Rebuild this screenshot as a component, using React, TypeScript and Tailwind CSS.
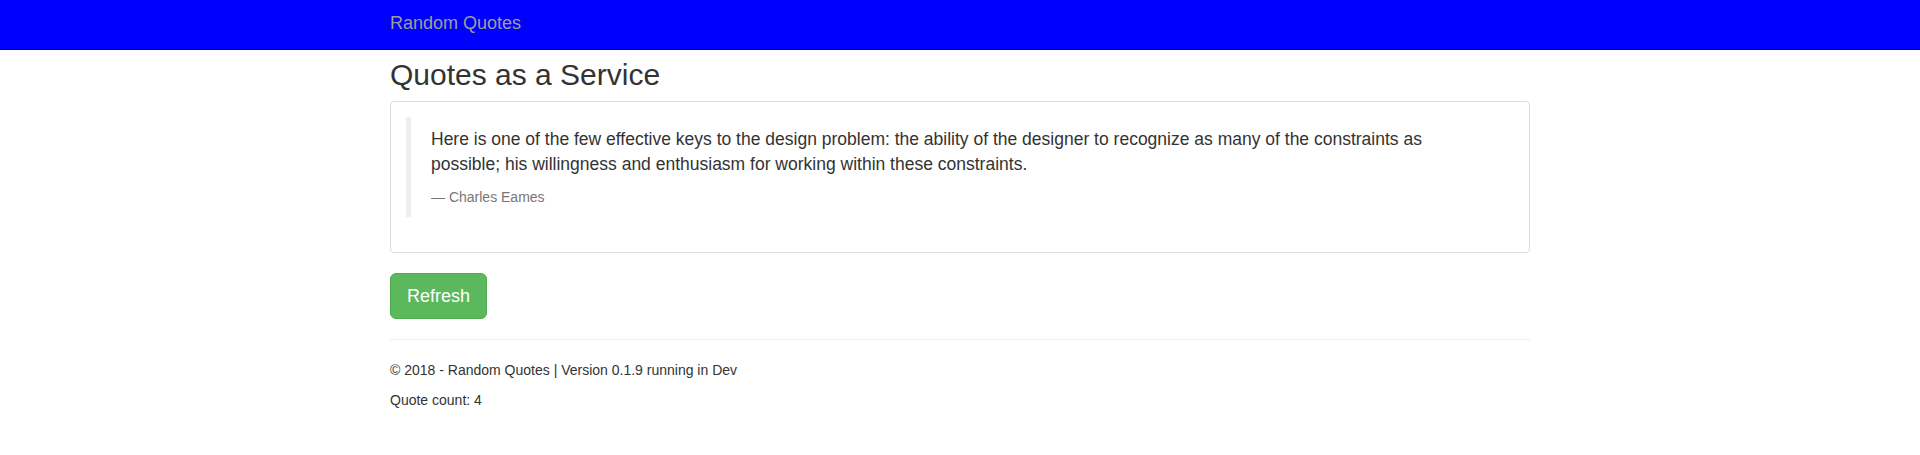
export default function App() {
  return (
    <div className="min-h-screen bg-white text-[14px] leading-[20px] text-[#333] font-['Liberation_Sans',Arial,sans-serif]">
      <nav className="h-[50px] bg-[#0000ff] border-b border-[#080808]">
        <div className="mx-auto w-[1170px] px-[15px]">
          <a className="block pt-[13px] text-[18px] leading-[20px] text-[#9d9d9d]" href="#">
            Random Quotes
          </a>
        </div>
      </nav>

      <main className="mx-auto w-[1170px] px-[15px]">
        <h2 className="mt-[8px] mb-[10px] text-[30px] leading-[33px] font-normal">Quotes as a Service</h2>

        <div className="rounded-[4px] border border-[#ddd] p-[15px]">
          <blockquote className="mb-[20px] border-l-[5px] border-[#eee] px-[20px] py-[10px] text-[17.5px] leading-[25px]">
            <p className="mb-[10px]">
              Here is one of the few effective keys to the design problem: the ability of the designer to recognize as many of
              the constraints as possible; his willingness and enthusiasm for working within these constraints.
            </p>
            <footer className="text-[14px] leading-[20px] text-[#777]">— Charles Eames</footer>
          </blockquote>
        </div>

        <button className="mt-[20px] rounded-[6px] border border-[#4cae4c] bg-[#5cb85c] px-[16px] py-[10px] text-[18px] leading-[24px] text-white">
          Refresh
        </button>

        <hr className="mt-[20px] mb-[20px] border-t border-[#eee]" />

        <footer>
          <p className="mb-[10px]">© 2018 - Random Quotes | Version 0.1.9 running in Dev</p>
          <p className="mb-[10px]">Quote count: 4</p>
        </footer>
      </main>
    </div>
  );
}
